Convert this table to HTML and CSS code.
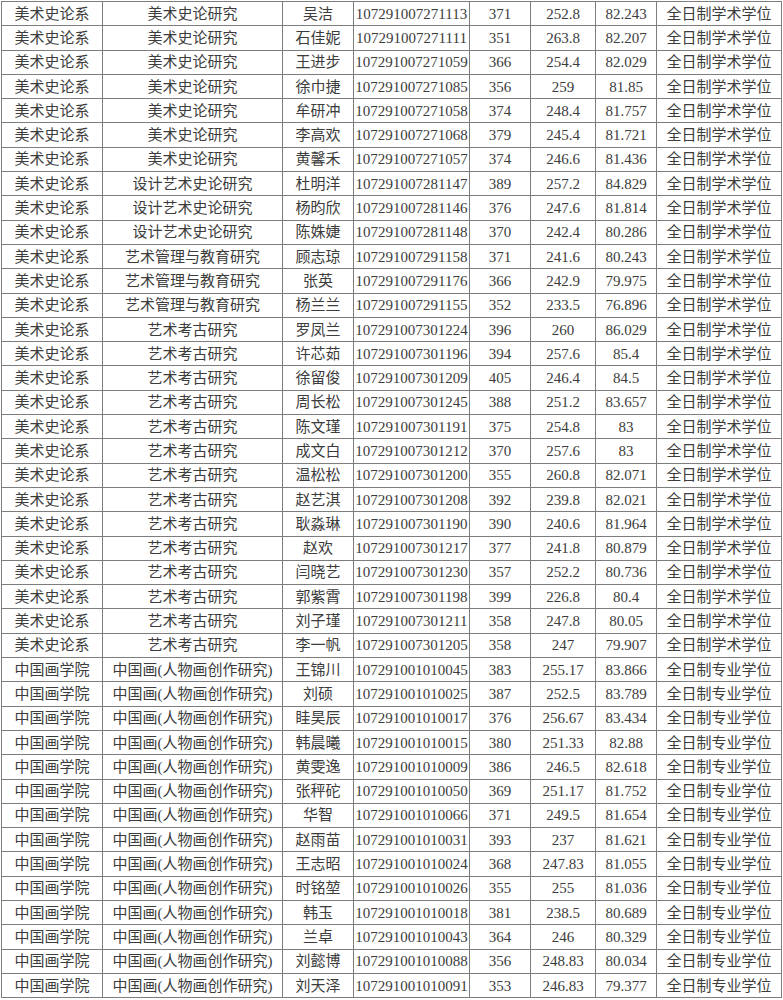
FILE: index.html
```html
<!DOCTYPE html>
<html lang="zh">
<head>
<meta charset="utf-8">
<title>录取名单</title>
<link rel="stylesheet" href="styles.css">
</head>
<body>
<table class="list">
<colgroup>
<col class="c1"><col class="c2"><col class="c3"><col class="c4"><col class="c5"><col class="c6"><col class="c7"><col class="c8">
</colgroup>
<tbody>
<tr><td>美术史论系</td><td>美术史论研究</td><td>吴洁</td><td>107291007271113</td><td>371</td><td>252.8</td><td>82.243</td><td>全日制学术学位</td></tr>
<tr><td>美术史论系</td><td>美术史论研究</td><td>石佳妮</td><td>107291007271111</td><td>351</td><td>263.8</td><td>82.207</td><td>全日制学术学位</td></tr>
<tr><td>美术史论系</td><td>美术史论研究</td><td>王进步</td><td>107291007271059</td><td>366</td><td>254.4</td><td>82.029</td><td>全日制学术学位</td></tr>
<tr><td>美术史论系</td><td>美术史论研究</td><td>徐巾捷</td><td>107291007271085</td><td>356</td><td>259</td><td>81.85</td><td>全日制学术学位</td></tr>
<tr><td>美术史论系</td><td>美术史论研究</td><td>牟研冲</td><td>107291007271058</td><td>374</td><td>248.4</td><td>81.757</td><td>全日制学术学位</td></tr>
<tr><td>美术史论系</td><td>美术史论研究</td><td>李高欢</td><td>107291007271068</td><td>379</td><td>245.4</td><td>81.721</td><td>全日制学术学位</td></tr>
<tr><td>美术史论系</td><td>美术史论研究</td><td>黄馨禾</td><td>107291007271057</td><td>374</td><td>246.6</td><td>81.436</td><td>全日制学术学位</td></tr>
<tr><td>美术史论系</td><td>设计艺术史论研究</td><td>杜明洋</td><td>107291007281147</td><td>389</td><td>257.2</td><td>84.829</td><td>全日制学术学位</td></tr>
<tr><td>美术史论系</td><td>设计艺术史论研究</td><td>杨昀欣</td><td>107291007281146</td><td>376</td><td>247.6</td><td>81.814</td><td>全日制学术学位</td></tr>
<tr><td>美术史论系</td><td>设计艺术史论研究</td><td>陈姝婕</td><td>107291007281148</td><td>370</td><td>242.4</td><td>80.286</td><td>全日制学术学位</td></tr>
<tr><td>美术史论系</td><td>艺术管理与教育研究</td><td>顾志琼</td><td>107291007291158</td><td>371</td><td>241.6</td><td>80.243</td><td>全日制学术学位</td></tr>
<tr><td>美术史论系</td><td>艺术管理与教育研究</td><td>张英</td><td>107291007291176</td><td>366</td><td>242.9</td><td>79.975</td><td>全日制学术学位</td></tr>
<tr><td>美术史论系</td><td>艺术管理与教育研究</td><td>杨兰兰</td><td>107291007291155</td><td>352</td><td>233.5</td><td>76.896</td><td>全日制学术学位</td></tr>
<tr><td>美术史论系</td><td>艺术考古研究</td><td>罗凤兰</td><td>107291007301224</td><td>396</td><td>260</td><td>86.029</td><td>全日制学术学位</td></tr>
<tr><td>美术史论系</td><td>艺术考古研究</td><td>许芯茹</td><td>107291007301196</td><td>394</td><td>257.6</td><td>85.4</td><td>全日制学术学位</td></tr>
<tr><td>美术史论系</td><td>艺术考古研究</td><td>徐留俊</td><td>107291007301209</td><td>405</td><td>246.4</td><td>84.5</td><td>全日制学术学位</td></tr>
<tr><td>美术史论系</td><td>艺术考古研究</td><td>周长松</td><td>107291007301245</td><td>388</td><td>251.2</td><td>83.657</td><td>全日制学术学位</td></tr>
<tr><td>美术史论系</td><td>艺术考古研究</td><td>陈文瑾</td><td>107291007301191</td><td>375</td><td>254.8</td><td>83</td><td>全日制学术学位</td></tr>
<tr><td>美术史论系</td><td>艺术考古研究</td><td>成文白</td><td>107291007301212</td><td>370</td><td>257.6</td><td>83</td><td>全日制学术学位</td></tr>
<tr><td>美术史论系</td><td>艺术考古研究</td><td>温松松</td><td>107291007301200</td><td>355</td><td>260.8</td><td>82.071</td><td>全日制学术学位</td></tr>
<tr><td>美术史论系</td><td>艺术考古研究</td><td>赵艺淇</td><td>107291007301208</td><td>392</td><td>239.8</td><td>82.021</td><td>全日制学术学位</td></tr>
<tr><td>美术史论系</td><td>艺术考古研究</td><td>耿淼琳</td><td>107291007301190</td><td>390</td><td>240.6</td><td>81.964</td><td>全日制学术学位</td></tr>
<tr><td>美术史论系</td><td>艺术考古研究</td><td>赵欢</td><td>107291007301217</td><td>377</td><td>241.8</td><td>80.879</td><td>全日制学术学位</td></tr>
<tr><td>美术史论系</td><td>艺术考古研究</td><td>闫晓艺</td><td>107291007301230</td><td>357</td><td>252.2</td><td>80.736</td><td>全日制学术学位</td></tr>
<tr><td>美术史论系</td><td>艺术考古研究</td><td>郭紫霄</td><td>107291007301198</td><td>399</td><td>226.8</td><td>80.4</td><td>全日制学术学位</td></tr>
<tr><td>美术史论系</td><td>艺术考古研究</td><td>刘子瑾</td><td>107291007301211</td><td>358</td><td>247.8</td><td>80.05</td><td>全日制学术学位</td></tr>
<tr><td>美术史论系</td><td>艺术考古研究</td><td>李一帆</td><td>107291007301205</td><td>358</td><td>247</td><td>79.907</td><td>全日制学术学位</td></tr>
<tr><td>中国画学院</td><td>中国画(人物画创作研究)</td><td>王锦川</td><td>107291001010045</td><td>383</td><td>255.17</td><td>83.866</td><td>全日制专业学位</td></tr>
<tr><td>中国画学院</td><td>中国画(人物画创作研究)</td><td>刘硕</td><td>107291001010025</td><td>387</td><td>252.5</td><td>83.789</td><td>全日制专业学位</td></tr>
<tr><td>中国画学院</td><td>中国画(人物画创作研究)</td><td>眭昊辰</td><td>107291001010017</td><td>376</td><td>256.67</td><td>83.434</td><td>全日制专业学位</td></tr>
<tr><td>中国画学院</td><td>中国画(人物画创作研究)</td><td>韩晨曦</td><td>107291001010015</td><td>380</td><td>251.33</td><td>82.88</td><td>全日制专业学位</td></tr>
<tr><td>中国画学院</td><td>中国画(人物画创作研究)</td><td>黄雯逸</td><td>107291001010009</td><td>386</td><td>246.5</td><td>82.618</td><td>全日制专业学位</td></tr>
<tr><td>中国画学院</td><td>中国画(人物画创作研究)</td><td>张秤砣</td><td>107291001010050</td><td>369</td><td>251.17</td><td>81.752</td><td>全日制专业学位</td></tr>
<tr><td>中国画学院</td><td>中国画(人物画创作研究)</td><td>华智</td><td>107291001010066</td><td>371</td><td>249.5</td><td>81.654</td><td>全日制专业学位</td></tr>
<tr><td>中国画学院</td><td>中国画(人物画创作研究)</td><td>赵雨苗</td><td>107291001010031</td><td>393</td><td>237</td><td>81.621</td><td>全日制专业学位</td></tr>
<tr><td>中国画学院</td><td>中国画(人物画创作研究)</td><td>王志昭</td><td>107291001010024</td><td>368</td><td>247.83</td><td>81.055</td><td>全日制专业学位</td></tr>
<tr><td>中国画学院</td><td>中国画(人物画创作研究)</td><td>时铭堃</td><td>107291001010026</td><td>355</td><td>255</td><td>81.036</td><td>全日制专业学位</td></tr>
<tr><td>中国画学院</td><td>中国画(人物画创作研究)</td><td>韩玉</td><td>107291001010018</td><td>381</td><td>238.5</td><td>80.689</td><td>全日制专业学位</td></tr>
<tr><td>中国画学院</td><td>中国画(人物画创作研究)</td><td>兰卓</td><td>107291001010043</td><td>364</td><td>246</td><td>80.329</td><td>全日制专业学位</td></tr>
<tr><td>中国画学院</td><td>中国画(人物画创作研究)</td><td>刘懿博</td><td>107291001010088</td><td>356</td><td>248.83</td><td>80.034</td><td>全日制专业学位</td></tr>
<tr><td>中国画学院</td><td>中国画(人物画创作研究)</td><td>刘天泽</td><td>107291001010091</td><td>353</td><td>246.83</td><td>79.377</td><td>全日制专业学位</td></tr>
</tbody>
</table>
</body>
</html>
```
FILE: styles.css
```css
html, body {
  margin: 0;
  padding: 0;
  background: #ffffff;
}
body {
  padding: 1px 0 0 1px;
}
.list {
  border-collapse: collapse;
  table-layout: fixed;
  width: 780px;
  font-family: "Liberation Serif", "Noto Sans CJK SC", serif;
  font-size: 15px;
  color: #3c3c3c;
}
.list td {
  border: 1px solid #7d7d7d;
  height: 23.3px;
  padding: 0;
  text-align: center;
  vertical-align: middle;
  line-height: 18px;
  white-space: nowrap;
}
.c1 { width: 101px; }
.c2 { width: 180px; }
.c3 { width: 71px; }
.c4 { width: 116px; }
.c5 { width: 61px; }
.c6 { width: 65px; }
.c7 { width: 61px; }
.c8 { width: 125px; }
```
